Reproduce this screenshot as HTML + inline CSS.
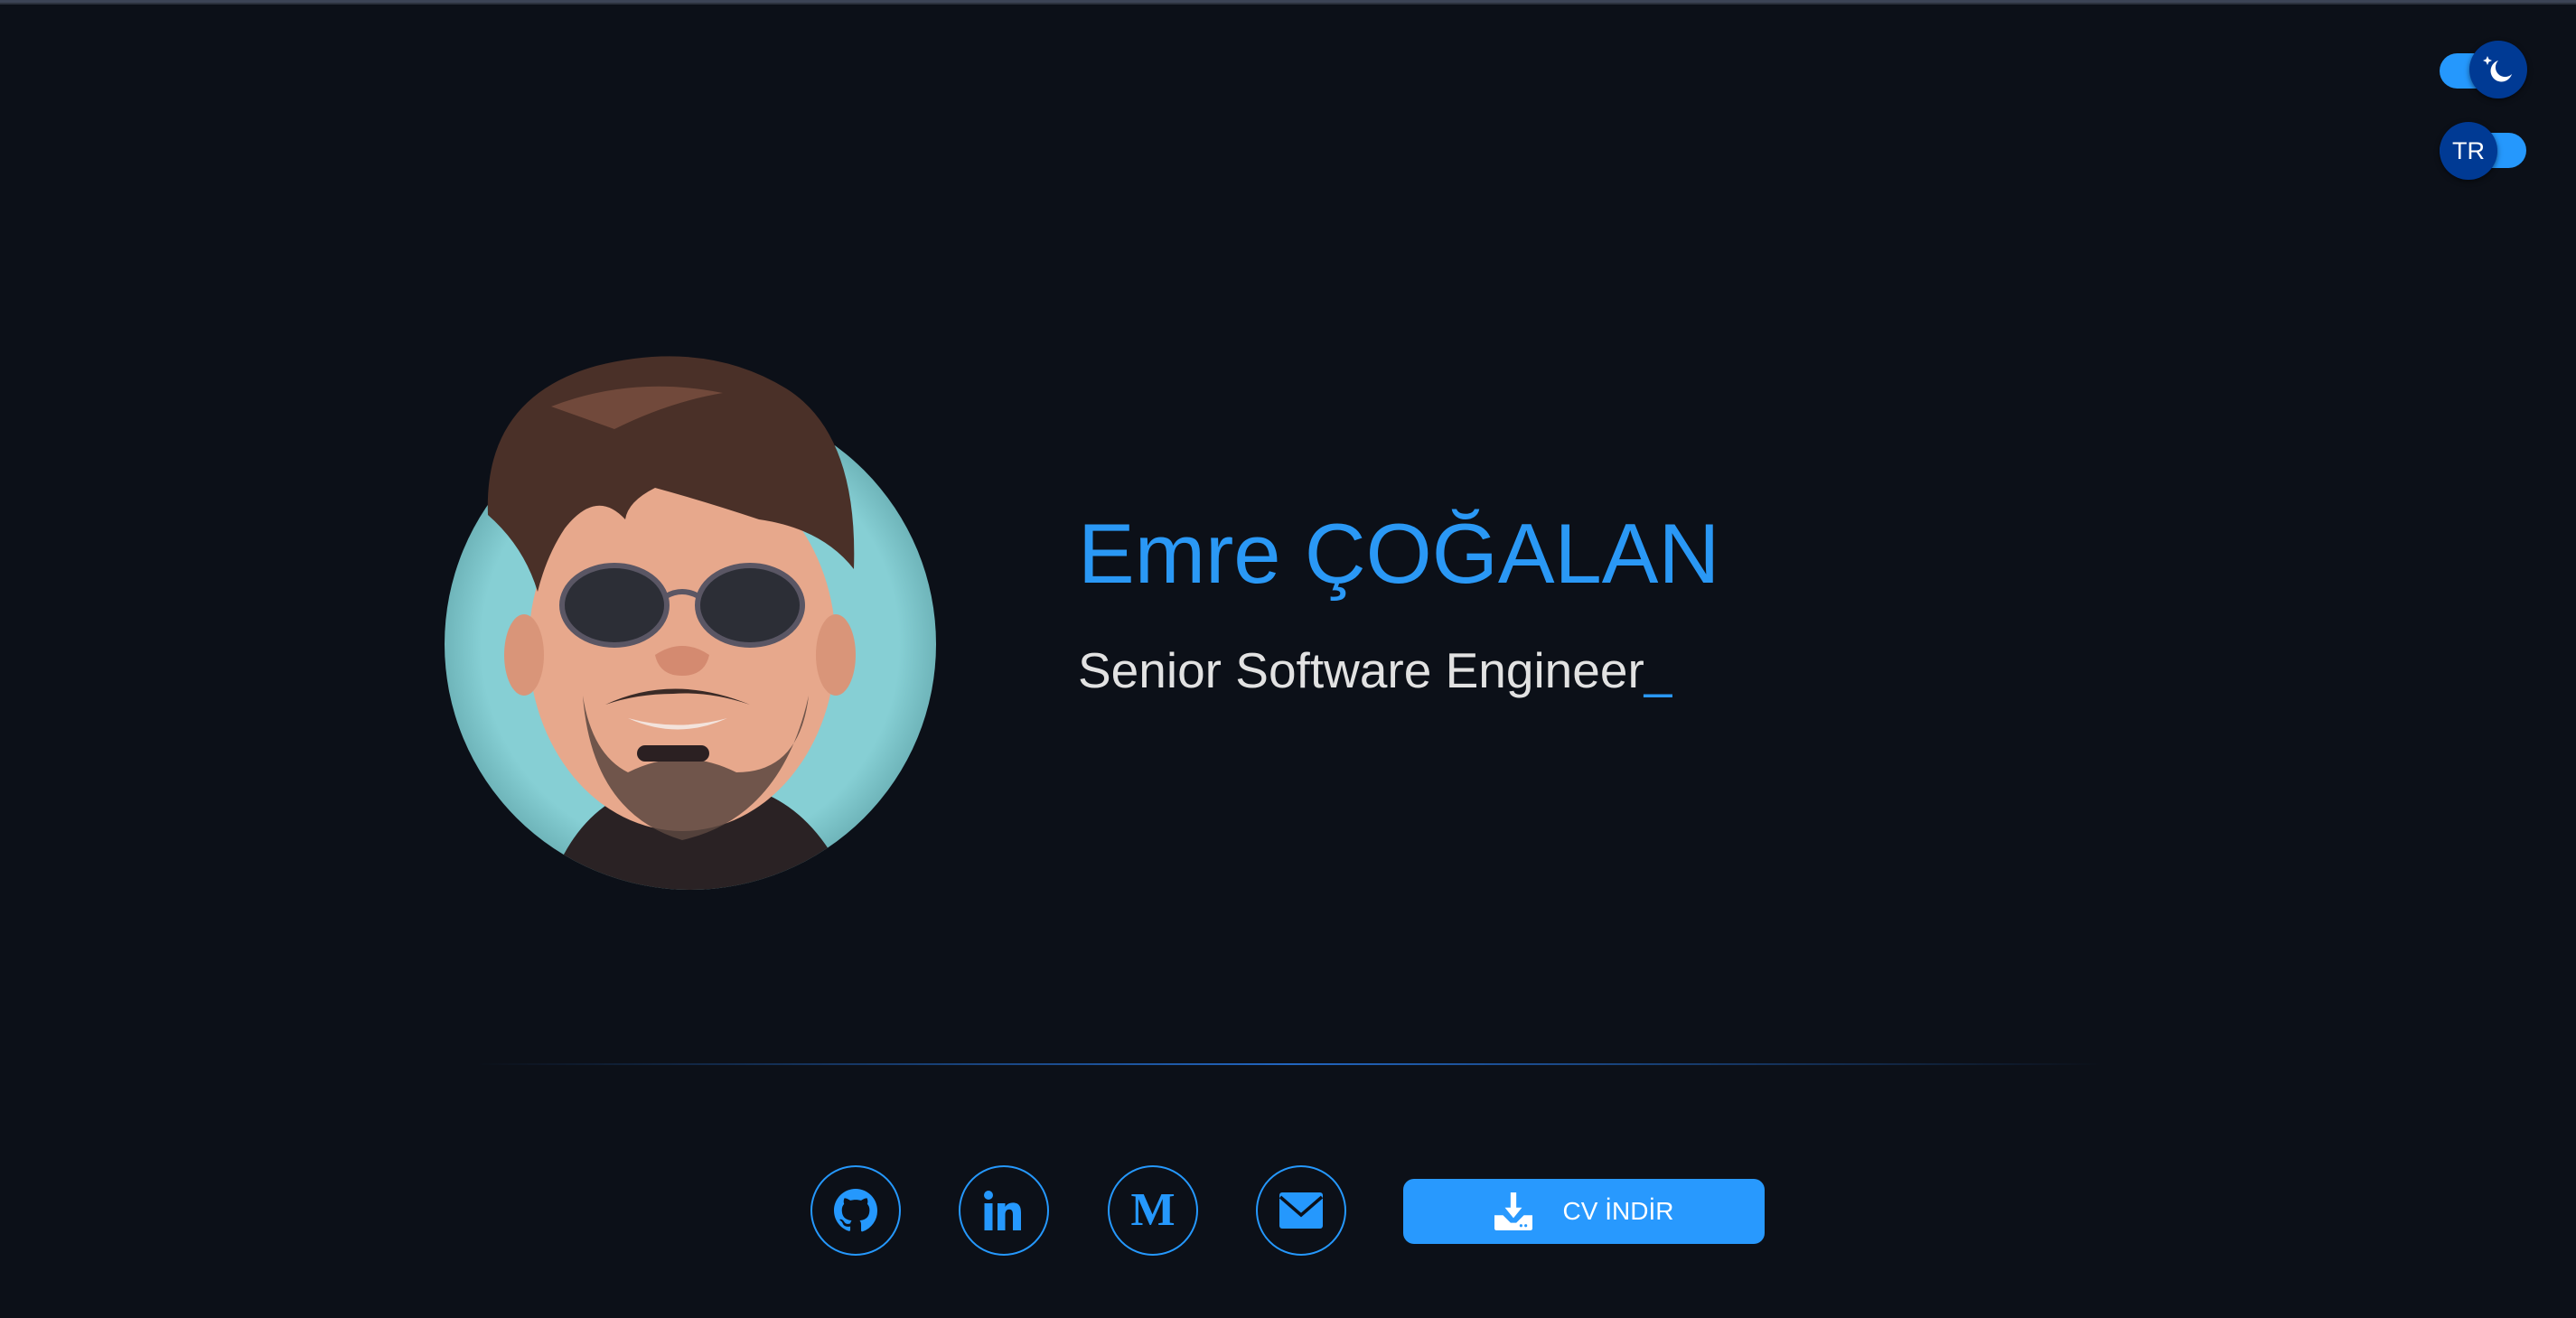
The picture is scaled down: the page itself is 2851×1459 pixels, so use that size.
<!DOCTYPE html>
<html><head><meta charset="utf-8"><style>
html,body{margin:0;padding:0;}
body{width:2851px;height:1459px;background:#0c1018;position:relative;overflow:hidden;font-family:"Liberation Sans",sans-serif;}
.topbar{position:absolute;left:0;top:0;width:100%;height:3px;background:#3c4456;border-bottom:2px solid #2b313c;}
.abs{position:absolute;}
.track{position:absolute;background:#2598fd;border-radius:20px;}
.knob{position:absolute;background:#003a94;border-radius:50%;box-shadow:0 2px 6px rgba(0,0,0,.5);}
.name{position:absolute;left:1193px;top:566px;font-size:94px;color:#2a98f5;white-space:nowrap;line-height:1;}
.sub{position:absolute;left:1193px;top:715px;font-size:55px;color:#e2e2e2;white-space:nowrap;line-height:1;}
.sub span{color:#2a98f5;}
.divider{position:absolute;left:527px;top:1177px;width:1800px;height:2px;background:linear-gradient(90deg,rgba(37,120,220,0),#2266c0 50%,rgba(37,120,220,0));}
.ic{position:absolute;top:1290px;width:96px;height:96px;border:2px solid #2598fd;border-radius:50%;display:flex;align-items:center;justify-content:center;}
.btn{position:absolute;left:1553px;top:1305px;width:400px;height:72px;background:#2899fe;border-radius:12px;color:#fff;font-size:28px;display:flex;align-items:center;justify-content:center;}
</style></head><body>
<div class="topbar"></div>

<div class="track" style="left:2700px;top:59px;width:96px;height:39px;"></div>
<div class="knob" style="left:2733px;top:45px;width:64px;height:64px;">
<svg width="64" height="64" viewBox="0 0 64 64"><path d="M32 22 A12 12 0 1 0 47 37 A9 9 0 1 1 32 22Z" fill="#fff"/><path d="M20 17 l1.5 3.5 3.5 1.5-3.5 1.5-1.5 3.5-1.5-3.5-3.5-1.5 3.5-1.5z" fill="#fff"/></svg></div>

<div class="track" style="left:2700px;top:147px;width:96px;height:39px;"></div>
<div class="knob" style="left:2700px;top:135px;width:64px;height:64px;color:#fff;font-size:27px;display:flex;align-items:center;justify-content:center;">TR</div>

<svg class="abs" style="left:480px;top:370px" width="580" height="640" viewBox="0 0 580 640">
<defs><radialGradient id="bg" cx="50%" cy="50%" r="50%"><stop offset="85%" stop-color="#86cfd4"/><stop offset="100%" stop-color="#6fb5ba"/></radialGradient>
<clipPath id="cc"><path d="M12 343 A272 272 0 0 0 556 343 L556 0 L12 0Z"/></clipPath></defs>
<circle cx="284" cy="343" r="272" fill="url(#bg)"/>
<g clip-path="url(#cc)">
<path d="M120 640 Q150 520 240 500 L340 500 Q430 520 470 640Z" fill="#2a2224"/>
</g>
<ellipse cx="275" cy="345" rx="170" ry="205" fill="#e7a88c"/>
<ellipse cx="100" cy="355" rx="22" ry="45" fill="#d99579"/>
<ellipse cx="445" cy="355" rx="22" ry="45" fill="#d99579"/>
<path d="M165 400 Q175 530 275 560 Q385 535 415 400 Q405 485 335 485 Q275 455 215 485 Q175 465 165 400Z" fill="#5a4640" opacity=".85"/>
<path d="M190 410 Q265 375 350 410 Q305 395 265 398 Q225 398 190 410Z" fill="#3a2a26"/>
<path d="M215 425 Q270 450 325 425 Q270 440 215 425Z" fill="#f3e3dc"/>
<rect x="225" y="455" width="80" height="18" rx="9" fill="#2b2022"/>
<path d="M60 200 Q55 70 180 35 Q300 5 390 60 Q470 110 465 260 Q430 215 360 205 Q300 185 245 170 Q215 185 212 205 Q180 170 145 215 Q125 245 115 285 Q100 235 60 200Z" fill="#4a3028"/>
<path d="M130 80 Q220 45 320 65 Q260 75 200 105Z" fill="#7a5040" opacity=".8"/>
<ellipse cx="200" cy="300" rx="58" ry="44" fill="#2c2e36" stroke="#5a5664" stroke-width="6"/>
<ellipse cx="350" cy="300" rx="58" ry="44" fill="#2c2e36" stroke="#5a5664" stroke-width="6"/>
<path d="M257 290 Q275 280 293 290" stroke="#5a5664" stroke-width="6" fill="none"/>
<path d="M245 355 Q275 335 305 355 Q300 378 275 378 Q250 378 245 355Z" fill="#d48a70"/>
</svg>

<div class="name">Emre ÇOĞALAN</div>
<div class="sub">Senior Software Engineer<span>_</span></div>
<div class="divider"></div>

<div class="ic" style="left:897px;">
<svg width="48" height="48" viewBox="0 0 16 16"><path fill="#2598fd" d="M8 0C3.58 0 0 3.58 0 8c0 3.540 2.29 6.53 5.47 7.59.4.07.55-.17.55-.38v-1.33c-2.23.48-2.7-.95-2.7-.95-.36-.92-.89-1.170-.89-1.17-.73-.5.05-.49.05-.49.81.06 1.23.83 1.23.83.72 1.23 1.88.87 2.34.67.07-.52.28-.87.51-1.070-1.78-.2-3.64-.89-3.640-3.950 0-.87.31-1.590.82-2.150-.08-.2-.36-1.020.08-2.12 0 0 .67-.21 2.2.82.64-.18 1.32-.27 2-.27.68 0 1.36.09 2 .27 1.53-1.04 2.2-.82 2.2-.82.44 1.1.16 1.92.08 2.12.51.56.82 1.27.82 2.15 0 3.07-1.87 3.75-3.65 3.95.29.25.54.73.54 1.48v2.2c0 .21.15.46.55.38A8.01 8.01 0 0016 8c0-4.42-3.58-8-8-8z"/></svg></div>
<div class="ic" style="left:1061px;">
<svg width="48" height="48" viewBox="0 0 48 48"><circle cx="7" cy="7" r="5" fill="#2598fd"/><rect x="2.5" y="16" width="9" height="30" fill="#2598fd"/><path d="M17 16h8.5v4c1.5-2.7 4.6-4.6 8.5-4.6 7 0 9 4.5 9 11V46h-9V28.5c0-3.5-1-5.8-4-5.8s-4.5 2.3-4.5 5.8V46H17z" fill="#2598fd"/></svg></div>
<div class="ic" style="left:1226px;">
<span style="font-family:'Liberation Serif',serif;font-weight:bold;font-size:52px;color:#2598fd;line-height:1;">M</span></div>
<div class="ic" style="left:1390px;">
<svg width="50" height="42" viewBox="0 0 50 42"><rect x="1" y="1" width="48" height="40" rx="3" fill="#2598fd"/><path d="M2 6 L25 26 L48 6" stroke="#0c1018" stroke-width="3.5" fill="none"/></svg></div>

<div class="btn">
<svg width="42" height="42" viewBox="0 0 40 40" style="margin-right:34px"><path d="M17 0h6v16h6L20 27 11 16h6z" fill="#fff"/><path d="M0 24h9l8 8h6l8-8h9v14a2 2 0 0 1-2 2H2a2 2 0 0 1-2-2z" fill="#fff"/><circle cx="28" cy="35" r="1.5" fill="#2899fe"/><circle cx="33" cy="35" r="1.5" fill="#2899fe"/></svg>
<span>CV İNDİR</span></div>
</body></html>
